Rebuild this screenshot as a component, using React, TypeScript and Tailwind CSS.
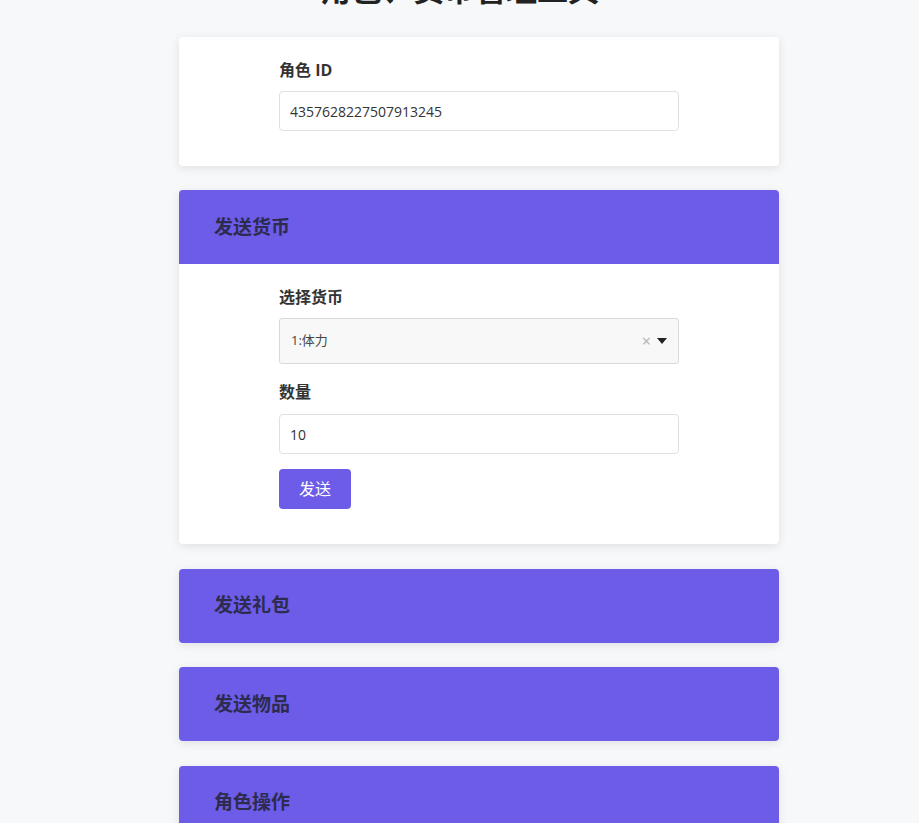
const font = { fontFamily: '"Open Sans", "Noto Sans CJK SC", sans-serif' };

function Panel({ title, children }: { title: string; children?: React.ReactNode }) {
  return (
    <div className="mb-[24.5px] w-[600px] overflow-hidden rounded-[4px] bg-white shadow-[0_2px_10px_rgba(0,0,0,0.1)]">
      <div className="flex h-[74px] items-center bg-[#6c5ce7] pl-[35px]">
        <h2 className="text-[19px] font-bold text-[#2d2b4e]">{title}</h2>
      </div>
      {children}
    </div>
  );
}

export default function App() {
  return (
    <div className="min-h-screen overflow-hidden bg-[#f7f8fa] text-[#333]" style={font}>
      <h1 className="mt-[-29px] h-[36px] text-center text-[31px] font-bold leading-[36px] text-[#222]">
        角色、货币管理工具
      </h1>

      <div className="ml-[179px] mt-[30px]">
        <div className="mb-[24px] w-[600px] rounded-[4px] bg-white pb-[35px] pt-[21px] shadow-[0_2px_10px_rgba(0,0,0,0.1)]">
          <div className="mx-auto w-[400px]">
            <label className="mb-[9px] block h-6 text-[16px] font-bold leading-6">角色 ID</label>
            <input
              className="h-[40px] w-full rounded-[4px] border border-[#e0e0e0] px-[10px] text-[14px] text-[#333] outline-none"
              defaultValue="4357628227507913245"
            />
          </div>
        </div>

        <Panel title="发送货币">
          <div className="mx-auto w-[400px] pb-[35px] pt-[21px]">
            <label className="mb-[9px] block h-6 text-[16px] font-bold leading-6">选择货币</label>
            <div className="mb-[16px] flex h-[46px] items-center rounded-[3px] border border-[#d9d9d9] bg-[#f8f8f8] pl-[11px] pr-[10px]">
              <span className="flex-1 text-[13px] text-[#444]">1:体力</span>
              <span className="mr-[6px] text-[16px] leading-none text-[#b0b0b0]">×</span>
              <svg width="10" height="6" viewBox="0 0 10 6" className="mr-[1px]">
                <path d="M0 0h10L5 6z" fill="#222" />
              </svg>
            </div>
            <label className="mb-[10px] block h-6 text-[16px] font-bold leading-6">数量</label>
            <input
              className="mb-[15px] h-[40px] w-full rounded-[4px] border border-[#e0e0e0] px-[10px] text-[14px] text-[#333] outline-none"
              defaultValue="10"
            />
            <button className="h-[40px] w-[72px] rounded-[4px] bg-[#6c5ce7] text-[16px] text-white">发送</button>
          </div>
        </Panel>

        <Panel title="发送礼包" />
        <Panel title="发送物品" />
        <Panel title="角色操作">
          <div className="h-[200px]" />
        </Panel>
      </div>
    </div>
  );
}
